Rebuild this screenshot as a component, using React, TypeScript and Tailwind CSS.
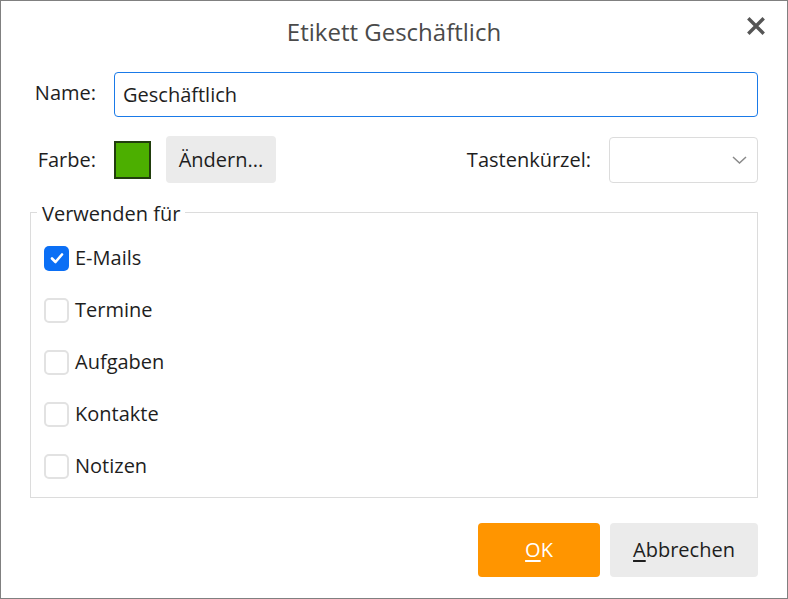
import React from "react";

const font = { fontFamily: '"Open Sans", "Noto Sans", "Liberation Sans", sans-serif' };

function Check({ checked, label }: { checked?: boolean; label: string }) {
  return (
    <div className="flex h-[52px] items-center">
      <div
        className={
          checked
            ? "flex h-[25px] w-[25px] items-center justify-center rounded-[5px] bg-[#0b6ff5]"
            : "h-[25px] w-[25px] rounded-[5px] border-2 border-[#e2e2e2] bg-white"
        }
      >
        {checked && (
          <svg width="16" height="16" viewBox="0 0 16 16">
            <path d="M3 8.5 L6.5 12 L13 4.5" fill="none" stroke="white" strokeWidth="2.6" strokeLinecap="round" strokeLinejoin="round" />
          </svg>
        )}
      </div>
      <span className="ml-[6px] text-[20px] text-[#1e1e1e]">{label}</span>
    </div>
  );
}

export default function App() {
  return (
    <div style={font} className="relative flex h-[599px] w-[788px] flex-col border border-[#808080] bg-white">
      <div className="flex h-[62px] items-center justify-center">
        <span className="text-[24px] text-[#4a4a4a]">Etikett Geschäftlich</span>
      </div>
      <button className="absolute right-[22px] top-[15px] flex h-[19px] w-[19px] items-center justify-center">
        <svg width="18" height="18" viewBox="0 0 18 18">
          <path d="M2.5 2.5 L15.5 15.5 M15.5 2.5 L2.5 15.5" stroke="#555555" strokeWidth="3.4" strokeLinecap="square" />
        </svg>
      </button>

      <div className="flex flex-col px-[29px]">
        <div className="mt-[9px] flex items-center">
          <div className="w-[66px] pb-[4px] text-right text-[20px] text-[#1e1e1e]">Name:</div>
          <div className="ml-[18px] flex h-[45px] flex-1 items-center rounded-[4px] border border-[#1a7ae8] px-[8px] text-[20px] text-[#1e1e1e]">
            Geschäftlich
          </div>
        </div>

        <div className="mt-[19px] flex items-center">
          <div className="w-[66px] text-right text-[20px] text-[#1e1e1e]">Farbe:</div>
          <div className="ml-[18px] h-[38px] w-[37px] border-2 border-[#213d0d] bg-[#4caf00]" />
          <div className="ml-[15px] flex h-[47px] w-[110px] items-center justify-center rounded-[4px] bg-[#ebebeb] text-[20px] text-[#1e1e1e]">
            Ändern...
          </div>
          <div className="flex-1" />
          <div className="text-[20px] text-[#1e1e1e]">Tastenkürzel:</div>
          <div className="ml-[18px] flex h-[46px] w-[149px] items-center justify-end rounded-[4px] border border-[#dcdcdc] pr-[10px]">
            <svg width="15" height="8" viewBox="0 0 15 8">
              <path d="M1 1 L7.5 7 L14 1" fill="none" stroke="#8a8a8a" strokeWidth="1.5" />
            </svg>
          </div>
        </div>

        <fieldset className="mt-[14px] border border-[#dcdcdc] pb-[5px] pl-[13px] pt-[5px]">
          <legend className="-ml-[7px] px-[5px] pt-[4px] text-[20px] leading-[26px] text-[#1e1e1e]">Verwenden für</legend>
          <Check checked label="E-Mails" />
          <Check label="Termine" />
          <Check label="Aufgaben" />
          <Check label="Kontakte" />
          <Check label="Notizen" />
        </fieldset>

        <div className="mt-[25px] flex justify-end gap-[10px]">
          <div className="flex h-[54px] w-[122px] items-center justify-center rounded-[4px] bg-[#ff9500] text-[20px] text-white">
            <span><span className="underline underline-offset-[3px]">O</span>K</span>
          </div>
          <div className="flex h-[54px] w-[148px] items-center justify-center rounded-[4px] bg-[#ebebeb] text-[20px] text-[#1e1e1e]">
            <span><span className="underline underline-offset-[3px]">A</span>bbrechen</span>
          </div>
        </div>
      </div>
    </div>
  );
}
